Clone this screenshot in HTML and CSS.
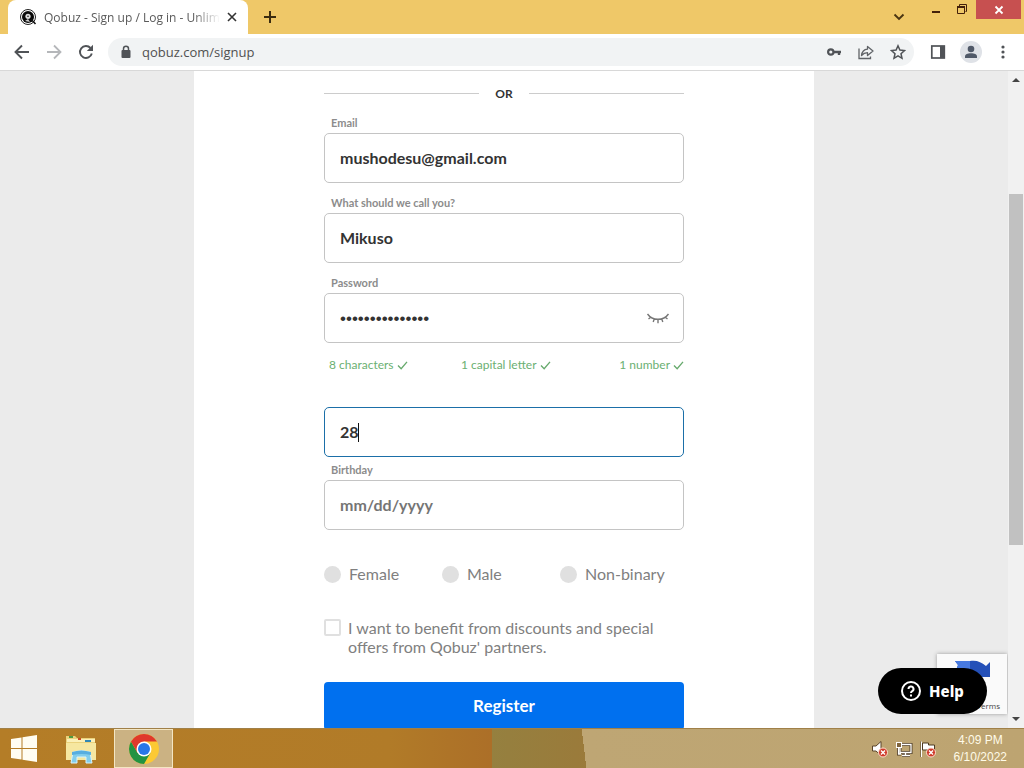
FILE: index.html
```html
<!DOCTYPE html>
<html lang="en">
<head>
<meta charset="utf-8">
<title>Qobuz - Sign up / Log in - Unlimited</title>
<link rel="stylesheet" href="styles.css">
</head>
<body>
<div class="tabstrip">
  <div class="tab">
    <svg class="tab-logo" viewBox="0 0 18 18" width="18" height="18"><circle cx="9" cy="9" r="7.500" fill="#fff" stroke="#222" stroke-width="1"/><circle cx="9" cy="9" r="6" fill="#080808"/><circle cx="9" cy="8.300" r="2.600" fill="#ddd"/><circle cx="9" cy="8.300" r=".8" fill="#111"/><path d="M12 11l4.500 5" stroke="#111" stroke-width="1.600"/><path d="M6 13l3-2 2 3" fill="#ccc"/></svg>
    <span class="tab-title">Qobuz - Sign up / Log in - Unlimi</span>
    <button class="plain" aria-label="Close tab"><svg width="10" height="10" viewBox="0 0 10 10"><path d="M1 1l8 8M9 1L1 9" stroke="#333" stroke-width="1.600"/></svg></button>
  </div>
  <button class="plain newtab" aria-label="New tab"><svg width="12" height="12" viewBox="0 0 12 12"><path d="M6 0v12M0 6h12" stroke="#3b2c10" stroke-width="2"/></svg></button>
  <div class="winctl">
    <button class="plain tabsearch" aria-label="Search tabs"><svg width="12" height="8" viewBox="0 0 12 8"><path d="M1.500 1.500L6 6l4.500-4.500" fill="none" stroke="#4a3512" stroke-width="1.900"/></svg></button>
    <button class="plain" aria-label="Minimize"><svg width="12" height="12" viewBox="0 0 12 12"><path d="M2 8h8" stroke="#43200a" stroke-width="2"/></svg></button>
    <button class="plain" aria-label="Restore"><svg width="12" height="12" viewBox="0 0 12 12"><path d="M1.500 3.500h7v6h-7zM3.500 2V.5h7v7H9.500" fill="none" stroke="#43200a"/><path d="M1 3h8" stroke="#43200a" stroke-width="2"/></svg></button>
    <button class="plain winclose" aria-label="Close"><svg width="10" height="10" viewBox="0 0 10 10"><path d="M1.500 1.500l7 7M8.500 1.500l-7 7" stroke="#fff" stroke-width="1.800"/></svg></button>
  </div>
</div>
<div class="toolbar">
  <button class="plain" aria-label="Back"><svg width="16" height="16" viewBox="0 0 16 16"><path d="M15 8H2M8 1.500L1.500 8 8 14.500" fill="none" stroke="#505357" stroke-width="1.900"/></svg></button>
  <button class="plain" aria-label="Forward"><svg width="16" height="16" viewBox="0 0 16 16"><path d="M1 8h13M8 1.500L14.500 8 8 14.500" fill="none" stroke="#b5b7ba" stroke-width="1.800"/></svg></button>
  <button class="plain" aria-label="Reload"><svg width="16" height="16" viewBox="0 0 16 16"><path d="M13.800 9.500A6 6 0 1 1 12.500 4" fill="none" stroke="#505357" stroke-width="1.900"/><path d="M15 .8V7H8.800z" fill="#505357"/></svg></button>
  <div class="omnibox">
    <svg width="12" height="14" viewBox="0 0 12 14"><rect x="1.500" y="5" width="9" height="8" rx="1" fill="#505357"/><path d="M3.500 5.500V3.700a2.500 2.500 0 0 1 5 0v1.800" fill="none" stroke="#505357" stroke-width="1.500"/></svg>
    <label class="sr" for="url" aria-label="Address"></label>
    <input id="url" class="url" type="text" value="qobuz.com/signup">
    <button class="plain" aria-label="Passwords"><svg width="16" height="16" viewBox="0 0 16 16"><circle cx="4.800" cy="8" r="2.700" fill="none" stroke="#505357" stroke-width="2.200"/><path d="M8 8h7M13 8v3" stroke="#505357" stroke-width="2.400"/></svg></button>
    <button class="plain" aria-label="Share"><svg width="16" height="16" viewBox="0 0 16 16"><path d="M1 4.500v10h11.500V12.500" fill="none" stroke="#606367" stroke-width="1.300"/><path d="M3.500 11.500c.5-4 2.500-6 6-6.300V2.500L15 7l-5.500 4.500V8.700c-2.500 0-4.300.8-6 2.800z" fill="none" stroke="#606367" stroke-width="1.300" stroke-linejoin="round"/></svg></button>
    <button class="plain" aria-label="Bookmark"><svg width="16" height="16" viewBox="0 0 16 16"><path d="M8 1.800l1.900 4.300 4.600.5-3.500 3.100 1 4.600L8 11.900l-4 2.400 1-4.600L1.500 6.600l4.600-.5z" fill="none" stroke="#505357" stroke-width="1.500"/></svg></button>
  </div>
  <div class="actions">
    <button class="plain" aria-label="Side panel"><svg width="16" height="16" viewBox="0 0 16 16"><rect x="1.800" y="2" width="12.500" height="12" fill="none" stroke="#505357" stroke-width="1.700"/><path d="M10 2h4.500v12H10z" fill="#505357"/></svg></button>
    <button class="plain" aria-label="Profile"><svg width="22" height="22" viewBox="0 0 22 22"><circle cx="11" cy="11" r="11" fill="#dfe2e7"/><circle cx="11" cy="8" r="3.300" fill="#505968"/><path d="M5 17v-1.500c0-2 2.500-3.200 6-3.200s6 1.200 6 3.200V17z" fill="#505968"/></svg></button>
    <button class="plain" aria-label="Menu"><svg width="14" height="16" viewBox="0 0 14 16"><g fill="#505357"><circle cx="7" cy="3" r="1.600"/><circle cx="7" cy="8" r="1.600"/><circle cx="7" cy="13" r="1.600"/></g></svg></button>
  </div>
</div>
<div class="viewport">
  <main class="page">
    <form class="card">
      <div class="or">OR</div>
      <div class="field"><label for="email">Email</label><input id="email" type="email" value="mushodesu@gmail.com"></div>
      <div class="field"><label for="name">What should we call you?</label><input id="name" type="text" value="Mikuso"></div>
      <div class="field"><label for="pw">Password</label>
        <div class="box"><input id="pw" class="pw" type="password" value="abcdefghijklmno"><button type="button" class="plain eye" aria-label="Show password"><svg width="24" height="14" viewBox="0 0 24 14"><path d="M1.500 3c5 7 16 7 21 0M5 6l-2.500 2M8.300 7.800L7.200 11M12 8.300v4M15.700 7.800l1.100 3.200M19 6l2.500 2" fill="none" stroke="#777" stroke-width="1.400"/></svg></button></div>
      </div>
      <ul class="rules">
        <li>8 characters<svg class="check" viewBox="0 0 12 10"><path d="M1 5l3.500 3.500L11 1"/></svg></li>
        <li>1 capital letter<svg class="check" viewBox="0 0 12 10"><path d="M1 5l3.500 3.500L11 1"/></svg></li>
        <li>1 number<svg class="check" viewBox="0 0 12 10"><path d="M1 5l3.500 3.500L11 1"/></svg></li>
      </ul>
      <div class="box"><input class="active" aria-label="Age" type="text" value="28"><span class="caret"></span></div>
      <div class="field birthday"><label for="bd">Birthday</label><input id="bd" type="text" placeholder="mm/dd/yyyy"></div>
      <div class="genders">
        <label><input type="radio" name="g">Female</label>
        <label><input type="radio" name="g">Male</label>
        <label><input type="radio" name="g">Non-binary</label>
      </div>
      <label class="optin"><input type="checkbox"><span>I want to benefit from discounts and special offers from Qobuz' partners.</span></label>
      <button type="button" class="register">Register</button>
    </form>
    <div class="captcha"><svg width="36" height="20" viewBox="0 0 36 20"><path d="M0 1l3 4-3 8 6-2c6-3 10-2 14 2l-3 4h18V2l-4 4C26 2 22 0 15 1z" fill="#2450b8"/><path d="M0 1l3 4-3 8 6-2c3-1.500 6-2 9-1V1z" fill="#4779df"/></svg><span>Terms</span></div>
    <button class="help"><svg width="20" height="20" viewBox="0 0 20 20" fill="none" stroke="#fff" stroke-width="2"><circle cx="10" cy="10" r="9"/><path d="M7.500 8a2.500 2.500 0 1 1 3.700 2.100c-.8.500-1.200.9-1.200 1.900M10 13.500v2"/></svg>Help</button>
  </main>
  <div class="scroll"><i class="up"></i><div class="track"><div class="thumb"></div></div><i class="down"></i></div>
</div>
<footer class="taskbar">
  <button class="plain task" aria-label="Start"><svg width="28" height="28" viewBox="0 0 28 28"><path d="M1 4l10.500-1.500V13H1zM12.500 2.300L27 0v13H12.500zM1 14h10.500v10.500L1 23zM12.500 14H27v13l-14.500-2.300z" fill="#fffdf2"/></svg></button>
  <button class="plain task" aria-label="File Explorer"><svg width="32" height="30" viewBox="0 0 32 30"><path d="M1 2h9l2 2h18v22H1z" fill="#ead27c"/><path d="M2 5h28v3H2z" fill="#fbf0b8"/><path d="M1 9h30v17H1z" fill="#f6e7a0"/><path d="M4 3h4" stroke-width="2" stroke="#4d9a42"/><path d="M13 5h3" stroke="#cc4b27" stroke-width="2"/><path d="M20 7h6" stroke="#3188b4" stroke-width="2"/><path d="M6 29l2-11q8-3 17 0l2 11h-6v-6h-9v6z" fill="#83cdec" stroke="#d8f4fd"/><path d="M7 18q9-3 19 0v3q-9-2-19 0z" fill="#58aee0"/></svg></button>
  <button class="plain task running" aria-label="Google Chrome"><svg width="32" height="32" viewBox="0 0 32 32"><circle cx="16" cy="16" r="15" fill="#fcc934"/><path d="M3.010 8.500A15 15 0 0 0 16 31L22.500 19.750H9.500z" fill="#229342"/><path d="M3.010 8.500A15 15 0 0 1 28.990 8.500H16L9.500 19.750z" fill="#df382c"/><circle cx="16" cy="16" r="7.500" fill="#fff"/><circle cx="16" cy="16" r="6" fill="#2877e8"/></svg></button>
  <div class="tray">
    <svg width="18" height="18" viewBox="0 0 18 18"><path d="M1.500 6H5l5-4.500v14L5 11H1.500z" fill="#fff" stroke="#5b452b"/><circle cx="12" cy="12.500" r="4.500" fill="#cf3a2a" stroke="#ffe0d0"/><path d="M10 10.500l4 4M14 10.500l-4 4" stroke="#fff" stroke-width="1.400"/></svg>
    <svg width="18" height="18" viewBox="0 0 18 18"><path d="M5 4.500h11v8H5zM10.500 12.500V15M7 15.500h8M3.500 5v9H6" fill="none" stroke="#4d3a22" stroke-width="3"/><path d="M5 4.500h11v8H5zM10.500 12.500V15M7 15.500h8M3.500 5v9H6" fill="none" stroke="#fff" stroke-width="1.300"/><rect x="1.500" y="2.500" width="5" height="5" fill="#80653e" stroke="#fff"/></svg>
    <svg width="18" height="18" viewBox="0 0 18 18"><path d="M2 1.500V17M3.500 3h6v2h6v7h-6v-2h-6z" fill="#fff" stroke="#4d3a22"/><path d="M2.500 1.500V17" stroke="#fff"/><circle cx="12" cy="12.500" r="4.500" fill="#cf3a2a" stroke="#ffe0d0"/><path d="M10 10.500l4 4M14 10.500l-4 4" stroke="#fff" stroke-width="1.400"/></svg>
  </div>
  <div class="clock">4:09 PM<br>6/10/2022</div>
</footer>
</body>
</html>
```
FILE: styles.css
```css
* { box-sizing: border-box; }
body {
  margin: 0;
  height: 100vh;
  display: flex;
  flex-direction: column;
  overflow: hidden;
  font-family: Lato, sans-serif;
}
svg { display: block; flex: none; }
.plain {
  border: 0;
  padding: 0;
  background: none;
  display: flex;
  align-items: center;
  justify-content: center;
}
.sr { position: absolute; }

.tabstrip { height: 34px; flex: none; display: flex; background: #efc868; padding-left: 8px; }
.tab {
  width: 240px;
  background: #fff;
  border-radius: 8px 8px 0 0;
  display: flex;
  align-items: center;
  gap: 7px;
  padding: 0 11px;
}
.tab-title {
  flex: 1;
  font: 12px "Open Sans", sans-serif;
  color: #5a5a5a;
  white-space: nowrap;
  overflow: hidden;
  mask-image: linear-gradient(to right, #000 85%, transparent);
}
.newtab { margin-left: 16px; }
.winctl { margin-left: auto; display: flex; align-items: flex-start; gap: 14px; padding-right: 3px; }
.winctl .plain { height: 20px; }
.winctl .tabsearch { height: 34px; margin-right: 11px; }
.winctl .winclose { width: 45px; height: 19px; margin-left: -6px; background: #c75050; }

.toolbar {
  height: 37px;
  flex: none;
  display: flex;
  align-items: center;
  gap: 16px;
  padding: 0 14px;
  background: #fff;
  border-bottom: 1px solid #d8d8d8;
}
.omnibox {
  flex: 1;
  height: 28px;
  margin-left: -2px;
  border-radius: 14px;
  background: #f1f3f4;
  display: flex;
  align-items: center;
  gap: 16px;
  padding: 0 8px 0 12px;
}
.actions { display: flex; align-items: center; gap: 14px; }
.url {
  flex: 1;
  margin-left: -6px;
  padding: 0;
  border: 0;
  background: none;
  font: 13px "Open Sans", sans-serif;
  color: #505050;
  outline: 0;
}

.viewport { flex: 1; min-height: 0; display: flex; background: #ebebeb; }
.page { flex: 1; position: relative; overflow: hidden; }
.card {
  max-width: 620px;
  margin: 0 auto;
  padding: 12px 130px 40px;
  background: #fff;
  display: flex;
  flex-direction: column;
}
.or {
  display: flex;
  align-items: center;
  gap: 16px;
  font-size: 12px;
  font-weight: 700;
  line-height: 21px;
  color: #333;
}
.or::before, .or::after { content: ""; flex: 1; height: 1px; background: #ccc; }
.field { margin-top: 10px; display: flex; flex-direction: column; }
.or + .field { margin-top: 9px; }
.field > label {
  padding-left: 7px;
  font-size: 11px;
  font-weight: 700;
  line-height: 20px;
  color: #8c8c8c;
}
.field input, .box input {
  width: 100%;
  height: 50px;
  border: 1px solid #c4c4c4;
  border-radius: 5px;
  padding: 0 15px 2px;
  background: #fff;
  font-family: inherit;
  font-size: 16px;
  font-weight: 700;
  color: #333;
  outline: 0;
}
.field input::placeholder { color: #757575; opacity: 1; }
.box { position: relative; }
.box .pw { padding: 2px 15px 0; font-family: "Liberation Sans", sans-serif; font-size: 17px; font-weight: 400; }
.box .active { border-color: #1b6fa8; }
.eye { position: absolute; right: 14px; top: 0; height: 50px; }
.caret { position: absolute; left: 34px; top: 16px; width: 1px; height: 19px; background: #111; }
.rules {
  list-style: none;
  margin: 12px 0 32px;
  padding: 0 0 0 5px;
  display: grid;
  grid-template-columns: 132px 1fr auto;
  font-size: 12px;
  line-height: 20px;
  color: #6bb072;
}
.rules li { display: flex; align-items: center; gap: 3px; }
.check { width: 11px; height: 9px; fill: none; stroke: #67aa6d; stroke-width: 1.5px; }
.birthday { margin-top: 3px; }
.genders { display: grid; grid-template-columns: 118px 118px 1fr; margin-top: 34px; }
.genders label { display: flex; align-items: center; gap: 8px; font-size: 16px; line-height: 20px; color: #808080; }
.genders input { appearance: none; margin: 0; width: 17px; height: 17px; border-radius: 50%; background: #e0e0e0; }
.optin { display: flex; gap: 7px; margin-top: 34px; font-size: 16px; line-height: 19px; color: #808080; }
.optin input { appearance: none; flex: none; margin: 1px 0 0; width: 17px; height: 17px; border: 2px solid #e0e0e0; border-radius: 2px; }
.register {
  margin-top: 26px;
  height: 48px;
  padding: 0 0 2px;
  border: 0;
  border-radius: 4px;
  background: #0070ef;
  color: #fff;
  font-family: inherit;
  font-size: 17px;
  font-weight: 700;
}
.captcha {
  position: absolute;
  right: 1px;
  bottom: 14px;
  width: 70px;
  height: 60px;
  padding: 6px 7px 3px 0;
  background: #fafafa;
  box-shadow: 0 0 4px #999;
  display: flex;
  flex-direction: column;
  align-items: flex-end;
  justify-content: space-between;
}
.captcha svg { margin-right: 9px; }
.captcha span { font: 8px "Open Sans", sans-serif; color: #444; }
.help {
  position: absolute;
  right: 21px;
  bottom: 14px;
  width: 109px;
  height: 46px;
  border: 0;
  border-radius: 23px;
  background: #000;
  color: #fff;
  font: 800 15px "Noto Sans", sans-serif;
  display: flex;
  align-items: center;
  justify-content: center;
  gap: 8px;
}
.scroll { width: 16px; background: #f1f1f1; display: flex; flex-direction: column; align-items: center; }
.up, .down { margin: 7px 0; border: 4px solid transparent; }
.up { border-top: 0; border-bottom-color: #444; }
.down { border-bottom: 0; border-top-color: #444; }
.track { flex: 1; width: 14px; padding-top: 105px; }
.thumb { height: 68%; background: #c1c1c1; }

.taskbar {
  height: 40px;
  flex: none;
  display: flex;
  align-items: center;
  background: linear-gradient(83deg, transparent 57%, #bea674 57%, #bda471 100%), linear-gradient(to right, #b47d27 0, #b17b28 38%, #ac6f28 48%, #95803f 48%, #9b7a3a 58%);
  border-top: 1px solid #a08048;
  padding-right: 17px;
}
.task { width: 48px; height: 39px; }
.task + .task { margin-left: 9px; }
.task.running { width: 59px; border: 1px solid #f3e6c4; background: #cbb283; }
.tray { margin-left: auto; display: flex; gap: 6px; }
.clock {
  margin-left: 17px;
  font: 12px/17px "Liberation Sans", sans-serif;
  color: #fffbe8;
  text-align: center;
}
```
